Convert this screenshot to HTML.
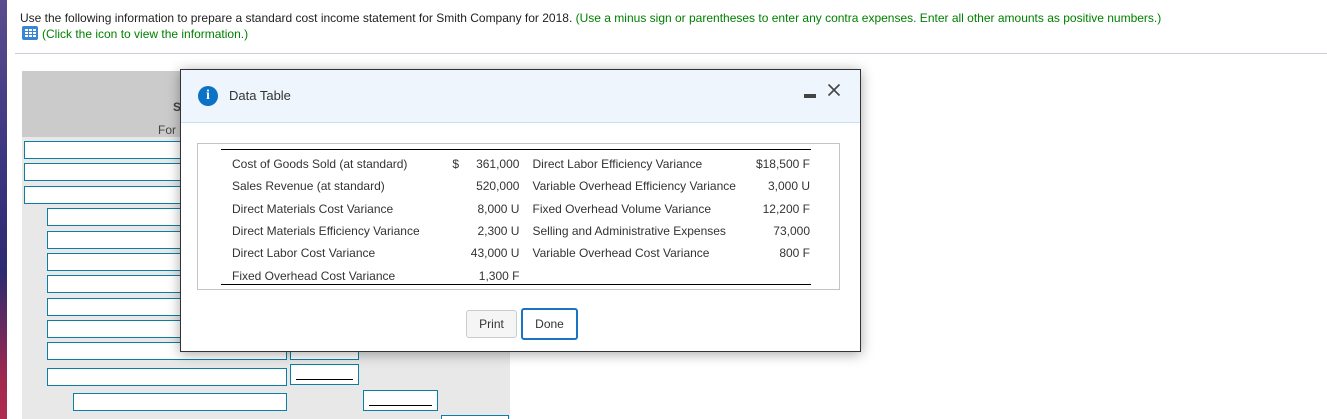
<!DOCTYPE html>
<html style="overflow:hidden;height:419px"><head><style>
*{margin:0;padding:0;box-sizing:border-box}
body{width:1327px;height:419px;overflow:hidden;background:#fff;font-family:"Liberation Sans",Arial,sans-serif;position:relative;color:#222}
.a{position:absolute}
.strip{left:0;top:0;width:7px;height:419px;background:linear-gradient(#5a4c8e 0%,#3a3580 40%,#2c2a70 65%,#a0284e 90%,#b02a50 100%)}
.q{left:20px;top:11px;font-size:12px;white-space:nowrap}
.g{color:#008000}
.box{position:absolute;border:1.5px solid #0a7ea4;background:#fff;height:18px}
.u{position:absolute;left:5px;right:5px;bottom:4px;border-top:1px solid #000}
.modal{left:180px;top:69px;width:681px;height:283px;background:#fff;border:1px solid #333;box-shadow:0 2px 12px rgba(0,0,0,.35)}
.mh{position:absolute;left:0;top:0;right:0;height:53px;background:#eff5fd;border-bottom:1px solid #c8e0f4}
table{border-collapse:collapse;font-size:12px;color:#333;table-layout:fixed}
td{height:22.3px;white-space:nowrap;padding:0;overflow:visible}
.r{text-align:right}
.btn{position:absolute;font-size:12px;color:#333;text-align:center;border-radius:3px}
</style></head><body>
<div class="a strip"></div>
<div class="a q">Use the following information to prepare a standard cost income statement for Smith Company for 2018. <span class="g">(Use a minus sign or parentheses to enter any contra expenses. Enter all other amounts as positive numbers.)</span></div>
<div class="a" style="left:22px;top:26px;width:16px;height:14px;background:#3a86d6;border-radius:2px">
<svg width="16" height="14" style="display:block"><g fill="#fff"><rect x="3" y="3" width="3" height="2"/><rect x="7" y="3" width="3" height="2"/><rect x="11" y="3" width="3" height="2"/><rect x="3" y="6" width="3" height="2"/><rect x="7" y="6" width="3" height="2"/><rect x="11" y="6" width="3" height="2"/><rect x="3" y="9" width="3" height="2"/><rect x="7" y="9" width="3" height="2"/><rect x="11" y="9" width="3" height="2"/></g></svg></div>
<div class="a g" style="left:42px;top:27px;font-size:12px">(Click the icon to view the information.)</div>
<div class="a" style="left:15px;top:53px;width:1312px;height:1px;background:#c9cedf"></div>
<div class="a" style="left:22px;top:71px;width:488px;height:348px;background:#e8e8e8"></div>
<div class="a" style="left:22px;top:71px;width:488px;height:66px;background:#cbcbcb"></div>
<div class="a" style="left:173px;top:100px;font-size:12px;font-weight:bold;color:#444">S</div>
<div class="a" style="left:158px;top:123px;font-size:12px;color:#444">For</div>
<div class="box" style="left:24px;top:141px;width:180px"></div>
<div class="box" style="left:24px;top:163px;width:180px"></div>
<div class="box" style="left:24px;top:186px;width:180px"></div>
<div class="box" style="left:47px;top:208px;width:160px"></div>
<div class="box" style="left:47px;top:231px;width:160px"></div>
<div class="box" style="left:47px;top:253px;width:160px"></div>
<div class="box" style="left:47px;top:275px;width:160px"></div>
<div class="box" style="left:47px;top:298px;width:160px"></div>
<div class="box" style="left:47px;top:320px;width:160px"></div>
<div class="box" style="left:47px;top:342px;width:240px"></div>
<div class="box" style="left:290px;top:342px;width:69px"></div>
<div class="box" style="left:47px;top:368px;width:240px"></div>
<div class="box" style="left:290px;top:364px;width:69px;height:21px"><div class="u"></div></div>
<div class="box" style="left:73px;top:393px;width:214px"></div>
<div class="box" style="left:363px;top:390px;width:75px;height:21px"><div class="u"></div></div>
<div class="box" style="left:441px;top:415px;width:68px;height:4px;border-bottom:none"></div>
<div class="a modal">
 <div class="mh">
  <div class="a" style="left:17px;top:16px;width:20px;height:20px;border-radius:50%;background:#0b73c5;color:#fff;font:bold 14px 'Liberation Serif',serif;text-align:center;line-height:20px">i</div>
  <div class="a" style="left:48px;top:18px;font-size:13px;color:#333">Data Table</div>
  <div class="a" style="left:623px;top:24px;width:12px;height:4px;background:#444"></div>
  <svg class="a" style="left:646px;top:13px" width="14" height="14"><path d="M1.5 1.5L12.5 12.5M12.5 1.5L1.5 12.5" stroke="#444" stroke-width="1.6"/></svg>
 </div>
 <div class="a" style="left:16px;top:73px;width:643px;height:147px;border:1px solid #c4c4c4">
  <div class="a" style="left:23px;top:5px;width:590px;border-top:1.5px solid #000"></div>
  <div class="a" style="left:23px;top:140px;width:590px;border-top:1.5px solid #000"></div>
  <table class="a" style="left:34px;top:9px;width:578px">
   <colgroup><col style="width:220px"><col style="width:16px"><col style="width:51px"><col style="width:13px"><col style="width:219px"><col style="width:58px"></colgroup>
   <tr><td>Cost of Goods Sold (at standard)</td><td>$</td><td class="r">361,000</td><td></td><td>Direct Labor Efficiency Variance</td><td class="r">$18,500 F</td></tr>
   <tr><td>Sales Revenue (at standard)</td><td></td><td class="r">520,000</td><td></td><td>Variable Overhead Efficiency Variance</td><td class="r">3,000 U</td></tr>
   <tr><td>Direct Materials Cost Variance</td><td></td><td class="r">8,000 U</td><td></td><td>Fixed Overhead Volume Variance</td><td class="r">12,200 F</td></tr>
   <tr><td>Direct Materials Efficiency Variance</td><td></td><td class="r">2,300 U</td><td></td><td>Selling and Administrative Expenses</td><td class="r">73,000</td></tr>
   <tr><td>Direct Labor Cost Variance</td><td></td><td class="r">43,000 U</td><td></td><td>Variable Overhead Cost Variance</td><td class="r">800 F</td></tr>
   <tr><td>Fixed Overhead Cost Variance</td><td></td><td class="r">1,300 F</td><td></td><td></td><td></td></tr>
  </table>
 </div>
 <div class="btn" style="left:285px;top:240px;width:51px;height:28px;line-height:26px;background:#f5f5f5;border:1px solid #ccc">Print</div>
 <div class="btn" style="left:340px;top:238px;width:57px;height:32px;line-height:28px;background:#fff;border:2px solid #1a74c2">Done</div>
</div>
</body></html>
